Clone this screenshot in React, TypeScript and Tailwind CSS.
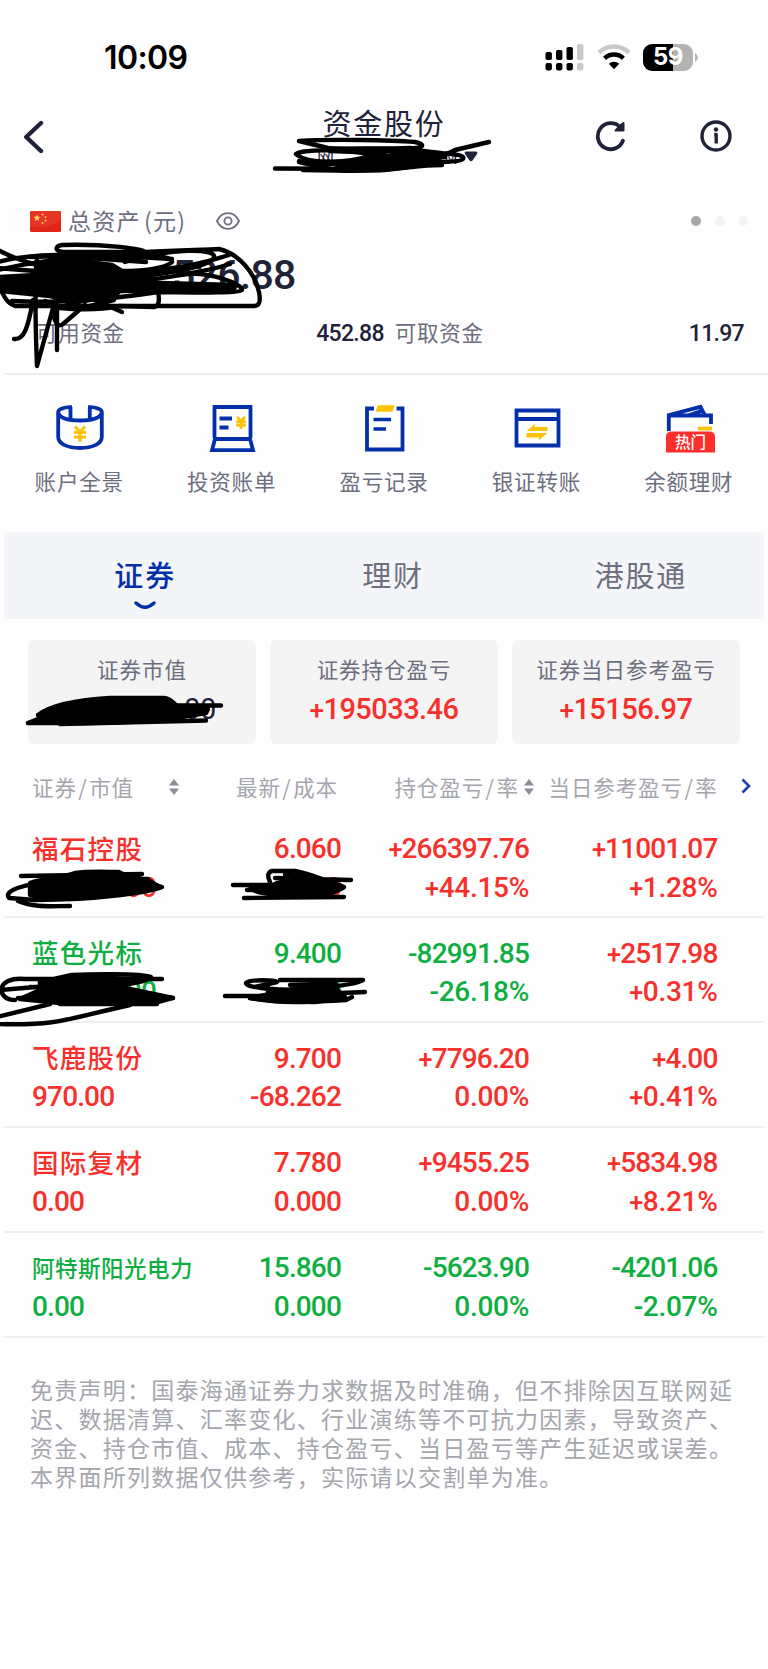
import clsx from 'clsx';
import type { ReactNode } from 'react';

type Tone = 'up' | 'down';

interface Holding {
  name: string;
  value: string;
  price: string;
  cost: string;
  profit: string;
  profitRate: string;
  day: string;
  dayRate: string;
  tone: Tone;
  dayTone: Tone;
  long?: boolean;
}

const holdings: Holding[] = [
  { name: '福石控股', value: '00', price: '6.060', cost: '0', profit: '+266397.76', profitRate: '+44.15%', day: '+11001.07', dayRate: '+1.28%', tone: 'up', dayTone: 'up' },
  { name: '蓝色光标', value: '00', price: '9.400', cost: '0', profit: '-82991.85', profitRate: '-26.18%', day: '+2517.98', dayRate: '+0.31%', tone: 'down', dayTone: 'up' },
  { name: '飞鹿股份', value: '970.00', price: '9.700', cost: '-68.262', profit: '+7796.20', profitRate: '0.00%', day: '+4.00', dayRate: '+0.41%', tone: 'up', dayTone: 'up' },
  { name: '国际复材', value: '0.00', price: '7.780', cost: '0.000', profit: '+9455.25', profitRate: '0.00%', day: '+5834.98', dayRate: '+8.21%', tone: 'up', dayTone: 'up' },
  { name: '阿特斯阳光电力', value: '0.00', price: '15.860', cost: '0.000', profit: '-5623.90', profitRate: '0.00%', day: '-4201.06', dayRate: '-2.07%', tone: 'down', dayTone: 'down', long: true },
];

const toneClass = { up: 'text-[#f8302c]', down: 'text-[#0fae41]' };

// Plus sign is set a bit smaller than the digits
const Num = ({ text, className }: { text: string; className?: string }) => (
  <span className={clsx('font-[Roboto] font-medium whitespace-nowrap', className)}>
    {text.startsWith('+') ? (
      <>
        <span className="text-[0.9em] leading-none">+</span>
        {text.slice(1)}
      </>
    ) : (
      text
    )}
  </span>
);

const StatusBar = () => (
  <div className="flex h-[98px] items-center justify-between pt-4 pr-[70px] pl-[104px]">
    <span className="pt-[2px] font-[Inter] text-[32px] leading-none font-semibold tracking-[-0.600px] text-black">10:09</span>
    <div className="flex items-center">
      <svg width="40" height="28" viewBox="0 0 40 28">
        <g fill="#000">
          <rect x="0.5" y="9" width="6.4" height="8" rx="1.8" />
          <rect x="11" y="7" width="6.4" height="10" rx="1.8" />
          <rect x="21.5" y="4" width="6.4" height="13" rx="1.8" />
          <rect x="0.5" y="20" width="6.4" height="7.4" rx="1.8" />
          <rect x="11" y="20" width="6.4" height="7.4" rx="1.8" />
          <rect x="21.5" y="20" width="6.4" height="7.4" rx="1.8" />
        </g>
        <rect x="32" y="1" width="6.4" height="16" rx="1.8" fill="#c9c9c9" />
        <rect x="32" y="20" width="6.4" height="7.4" rx="1.8" fill="#c9c9c9" />
      </svg>
      <svg className="ml-3" width="34" height="26" viewBox="0 0 34 26">
        <path d="M2 8.6a21.5 21.5 0 0 1 30 0" fill="none" stroke="#c9c9c9" strokeWidth="4.4" />
        <path d="M7.6 14.4a13.4 13.4 0 0 1 18.8 0" fill="none" stroke="#000" strokeWidth="4.4" />
        <path d="M17 25.2l-5.2-5.4a7.4 7.4 0 0 1 10.4 0z" fill="#000" />
      </svg>
      <div className="ml-3 flex h-[27px] w-[50px] items-center justify-center rounded-[9px] bg-linear-to-r from-black from-59% to-[#b3b3b3] to-59% font-[Inter] text-[24px] leading-none font-bold tracking-[-0.5px] text-white">
        59
      </div>
      <svg className="ml-0.5" width="3" height="9" viewBox="0 0 3 9">
        <path d="M0 0Q3 2 3 4.500Q3 7 0 9z" fill="#b3b3b3" />
      </svg>
    </div>
  </div>
);

const NavBar = () => (
  <div className="flex h-[76px] items-center pl-[22px] text-[#1f2238]">
    <svg className="mt-[1px] ml-[1px]" width="24" height="34" viewBox="0 0 24 34" fill="none" stroke="currentColor" strokeWidth="4.4" strokeLinecap="round" strokeLinejoin="round">
      <path d="M18 3L3.200 17L18 31" />
    </svg>
    <div className="ml-[246px] flex w-[188px] flex-col items-center">
      <h1 className="pr-[6px] text-[29px] leading-[38px] tracking-[1.8px]">资金股份</h1>
      <div className="flex h-[28px] items-center gap-2.5 pt-[3px] pl-[21px] text-[17px]">
        <span className="w-[16px]">网</span>
        <span className="w-[91px]" />
        <span>M</span>
        <svg className="-ml-[4px] shrink-0" width="14" height="11" viewBox="0 0 14 11">
          <path d="M2 0.500H12Q14 0.800 13 3L8.500 9.500Q7 11 5.500 9.500L1 3Q0 0.800 2 0.500z" fill="currentColor" />
        </svg>
      </div>
    </div>
    <div className="ml-[114px] flex items-center gap-[73px]">
      <svg width="32" height="32" viewBox="0 0 32 32" fill="none" stroke="currentColor" strokeWidth="3.800">
        <path d="M28 20.700A13 13 0 1 1 25 7" strokeLinecap="round" />
        <path d="M28.500 3V10.500H20.500L27 4z" fill="currentColor" strokeWidth="2" strokeLinejoin="round" />
      </svg>
      <svg width="32" height="32" viewBox="0 0 32 32" fill="none" stroke="currentColor" strokeWidth="3.400">
        <circle cx="16" cy="16" r="14" />
        <circle cx="16" cy="9.500" r="2.200" fill="currentColor" stroke="none" />
        <path d="M14.200 14.500H16.200V23.500" strokeWidth="3.400" strokeLinejoin="round" />
      </svg>
    </div>
  </div>
);

const star = 'M0 -3.800L0.900 -1.200H3.600L1.400 0.500L2.200 3.100L0 1.500L-2.200 3.100L-1.400 0.500L-3.600 -1.200H-0.900z';

const AssetPanel = () => (
  <section className="ml-1 border-b-2 border-[#ebecf1] pt-[26px] pb-[13px] text-[#6d6e7e]">
    <div className="flex h-[42px] items-center pr-[20px] pl-[26px]">
      <svg width="31" height="21" viewBox="0 0 31 21">
        <rect width="31" height="21" rx="1.500" fill="#e0261b" />
        <path d="M0 15Q16 20 31 8V0H0z" fill="#e83f2b" opacity="0.6" />
        <g fill="#ffde5c">
          <path d={star} transform="translate(7 7)" />
          <circle cx="12.500" cy="3.500" r="0.900" />
          <circle cx="15.500" cy="6" r="0.900" />
          <circle cx="15.500" cy="9.500" r="0.900" />
          <circle cx="12.500" cy="12" r="0.900" />
        </g>
      </svg>
      <span className="ml-[7px] pb-[2px] text-[23px] leading-[40px] tracking-[1.200px] whitespace-pre [word-spacing:-3px]">总资产 (元)</span>
      <svg className="ml-[30px]" width="24" height="18" viewBox="0 0 24 18" fill="none" stroke="currentColor" strokeWidth="1.800">
        <path d="M1 9C6 -1.500 18 -1.500 23 9C18 19.500 6 19.500 1 9z" />
        <circle cx="12" cy="9" r="3.600" />
      </svg>
      <div className="ml-auto flex gap-[13.300px]">
        <i className="size-[10px] rounded-full bg-[#a6a6a6]" />
        <i className="size-[10px] rounded-full bg-[#f4f4f4]" />
        <i className="size-[10px] rounded-full bg-[#f4f4f4]" />
      </div>
    </div>
    <div className="flex h-[66px] items-center pt-[2px] pl-[168px]">
      <Num text="526.88" className="text-[41px] tracking-[-0.700px] text-[#1f2238]" />
    </div>
    <div className="flex h-[52px] items-center pr-[24px] pl-[32px] text-[21.500px] tracking-[0.700px]">
      <span className="pb-[3px]">可用资金</span>
      <Num text="452.88" className="ml-auto pt-[1px] text-[23px] tracking-[-0.700px] text-[#1f2238]" />
      <span className="ml-[11px] w-[294px] pb-[3px]">可取资金</span>
      <Num text="11.97" className="pt-[1px] text-[23px] tracking-[-0.700px] text-[#1f2238]" />
    </div>
  </section>
);

const Action = ({ label, children }: { label: string; children: ReactNode }) => (
  <div className="flex flex-1 flex-col items-center">
    <svg className="ml-[1.500px]" width="50" height="50" viewBox="0 0 50 50" fill="none" stroke="#0330a8" strokeWidth="3.800">
      {children}
    </svg>
    <span className="mt-[12px] text-[21.500px] leading-[32px] tracking-[0.800px] text-[#6d6e7e]">{label}</span>
  </div>
);

const yen = 'M-5 -7L0 -1.500L5 -7M0 -1.500V8M-6 -1H6M-6 3.500H6';

const Actions = () => (
  <section className="flex h-[156.500px] px-[3px] pt-[28px]">
    <Action label="账户全景">
      <path d="M17 4.200H15C8 4.200 3.200 6.500 3.200 9V34C3.200 41 13 45 25 45S46.800 41 46.800 34V9C46.800 6.500 42 4.200 35 4.200H33" />
      <path d="M3.200 10C5 15 14 17.500 25 17.500S45 15 46.800 10M15.500 4V15.500M34.800 4V15.500" />
      <path d={yen} transform="translate(25 30.500)" stroke="#fdc30b" strokeWidth="3.200" />
    </Action>
    <Action label="投资账单">
      <path d="M7.500 35V4H43.500V35M5 47.200L8 36H43L46 47.200z" />
      <path d="M12.500 15.500H25M12.500 24.500H21.500" />
      <path d={yen} transform="translate(34 19.500) scale(0.8)" stroke="#fdc30b" strokeWidth="3.600" />
    </Action>
    <Action label="盈亏记录">
      <path d="M14 5.500H7V46.500H42.500V5.500H36.500" />
      <path d="M13.500 16.500H31M13.500 26H26" strokeWidth="3.600" />
      <path d="M18 2.300H35L32.500 8.700H15.500z" fill="#fdc30b" stroke="none" />
    </Action>
    <Action label="银证转账">
      <path d="M4.500 7.500H46.500V42.500H4.500zM4.500 16H46.500" />
      <path d="M14.500 28L23 21V24H35.500V28zM14.500 30H35.500L27 37V34.500H14.500z" fill="#fdc30b" stroke="none" />
    </Action>
    <Action label="余额理财">
      <path d="M3.800 28V12.500H46V21M4 12L35.500 3.800L40 12.500M23 12.500L36 8" />
      <path d="M33 25.500H47" stroke="#fdc30b" />
      <path d="M1 49.500V34Q1 28.500 6.500 28.500H44.500Q50 28.500 50 34V49.500z" fill="#fb302d" stroke="none" />
      <text x="25.500" y="44.500" textAnchor="middle" fill="#fff" stroke="none" fontSize="15.500" fontWeight="500">
        热门
      </text>
    </Action>
  </section>
);

const Tabs = () => (
  <div className="mx-1 flex h-[87px] bg-[#f4f5f9] pl-[18px] text-[29px] tracking-[1.800px] text-[#6d6e7e]">
    <div className="flex w-[249px] flex-col items-center pt-[21px] font-medium text-[#0330a8]">
      <span className="leading-[42px]">证券</span>
      <svg className="mt-[6px]" width="22" height="9" viewBox="0 0 22 9">
        <path d="M2 2Q11 10.500 20 2" fill="none" stroke="currentColor" strokeWidth="3.400" strokeLinecap="round" />
      </svg>
    </div>
    <div className="w-[252px] pt-[21px] text-center leading-[42px]">理财</div>
    <div className="w-[249px] pt-[21px] text-center leading-[42px]">港股通</div>
  </div>
);

const Card = ({ label, children }: { label: string; children: ReactNode }) => (
  <div className="flex h-[104px] flex-col items-center rounded-md bg-[#f4f4f4] pt-[11px]">
    <span className="text-[21.500px] leading-[36px] tracking-[0.950px] text-[#6d6e7e]">{label}</span>
    {children}
  </div>
);

const Sort = ({ className }: { className?: string }) => (
  <svg className={className} width="10" height="16" viewBox="0 0 10 16" fill="#8d8e99">
    <path d="M5 0L10 6.500H0zM5 16L10 9.500H0z" />
  </svg>
);

const Slash = () => <span className="mx-[1.500px]">/</span>;

const TableHead = () => (
  <div className="flex h-[69.600px] items-center pt-[17px] pl-8 text-[21.500px] tracking-[0.900px] text-[#a5a6ad]">
    <span className="w-[137px]">证券<Slash />市值</span>
    <Sort />
    <span className="ml-[57px] w-[158.500px]">最新<Slash />成本</span>
    <span className="w-[129px]">持仓盈亏<Slash />率</span>
    <Sort />
    <span className="ml-[15px] whitespace-nowrap">当日参考盈亏<Slash />率</span>
    <svg className="mb-[3px] ml-[23px]" width="10" height="16" viewBox="0 0 10 16" fill="none" stroke="#1c3fb5" strokeWidth="2.600">
      <path d="M1.500 1.500L8 8L1.500 14.500" />
    </svg>
  </div>
);

const Row = ({ item, index }: { item: Holding; index: number }) => {
  const tone = toneClass[item.tone];
  return (
    <div className="mx-1 h-[104.800px] border-b-2 border-[#efeff0] text-[28px] leading-[38.500px] tracking-[-0.850px]">
      <div className="-ml-1 grid grid-cols-[180px_129px_188px_188.500px] pt-[16.500px] pl-8">
        <div className={clsx('flex flex-col', tone)}>
          <span
            className={clsx(
              '-mt-[1.500px] mb-[1.500px] font-medium whitespace-nowrap',
              item.long ? 'text-[22.500px] tracking-[0.500px]' : 'text-[26.500px] tracking-[1.300px]',
            )}
          >
            {item.name}
          </span>
          <Num text={item.value} className={clsx(index < 2 && 'w-[124px] text-right')} />
        </div>
        <div className={clsx('flex flex-col text-right', tone)}>
          <Num text={item.price} />
          <Num text={item.cost} />
        </div>
        <div className={clsx('flex flex-col text-right', tone)}>
          <Num text={item.profit} />
          <Num text={item.profitRate} className="tracking-[-0.300px]" />
        </div>
        <div className={clsx('flex flex-col text-right', toneClass[item.dayTone])}>
          <Num text={item.day} />
          <Num text={item.dayRate} className="tracking-[-0.300px]" />
        </div>
      </div>
    </div>
  );
};

// Hand-drawn marker strokes hiding the account and private amounts
const Scribbles = () => (
  <svg className="pointer-events-none absolute top-0 left-0" width="768" height="1669" viewBox="0 0 768 1669" fill="none" stroke="#000" strokeWidth="4.400" strokeLinecap="round" strokeLinejoin="round">
    {/* account */}
    <path d="M299 141C330 139 390 140 415 142C426 144 424 149 410 148C380 149 345 150 328 148L299 141" />
    <path d="M275 168.500L384 169C415 169 440 158 455 150L489 142" />
    <path d="M328 149C370 148 410 149 424 151C440 154 466 153 463 159C460 163 420 163 390 161C350 161 320 168 299 161" />
    <path d="M296 154C300 149 350 149 372 155C350 163 308 165 296 154" />
    <path d="M340 165C380 158 400 152 440 156M350 167C390 170 420 160 445 157M303 170C340 170 350 172 384 170C410 168 420 165 442 165" />
    <path d="M340 166C370 161 390 158 432 157L425 162L380 170L335 169z" fill="#000" />
    <path d="M384 151L430 155M299 162L330 169M372 155L430 159M330 151L384 153" />

    {/* total assets */}
    <path d="M146 254C150 248 100 244 62 245C54 246 55 252 64 252L146 252C180 250 205 250 219 249C240 254 255 274 259 292C261 302 259 306 254 306L15 306C6 303 3 294 0 288" />
    <path d="M-2 250C20 262 60 274 110 274M-2 262C40 250 120 256 172 259M-2 270C60 255 120 256 146 256" />
    <path d="M60 262C110 256 174 252 172 262C160 274 90 272 50 276M125 262C170 248 216 248 214 257C212 268 150 276 115 279" />
    <path d="M229 255C190 268 150 272 100 275M230 264C205 272 150 281 110 284M-2 268C40 272 120 276 150 270M30 257L60 256L146 262" />
    <path d="M180 275C210 270 244 285 242 290C240 294 180 292 158 292C120 298 60 304 12 301" />
    <path d="M0 277L36 275L36 264L55 259L80 261L112 265L122 271L155 271L150 277L120 282L236 285L234 289L120 291C112 300 100 297 90 300L70 303L50 296L0 291z" fill="#000" />
    <path d="M158 292Q161 306 154 307L120 306C100 310 80 310 60 308L45 301M100 292L114 300L90 306" />
    <path d="M37 258C34 300 36 340 37 366L53 308M33 300C28 328 24 340 14 339M57 265V350M53 308C54 322 57 328 63 324L85 305M90 298L122 312" />

    {/* market value card */}
    <path d="M38 715C50 706 75 700 110 698L164 698C172 699 172 703 178 706L208 709L206 713L170 719C140 722 90 723 70 723L28 723L50 717z" fill="#000" />
    <path d="M175 705.500H221M28 723L38 719L160 717M60 724L206 720.500" />

    {/* first holding */}
    <path d="M30 883C40 879 65 877 75 873C90 871 105 872 119 872C125 876 145 879 150 881L158 886C140 892 100 896 80 898C60 899 40 899 30 895z" fill="#000" />
    <path d="M21 876L142 874M148 879L60 880C25 884 3 890 9 898L35 900C100 900 150 892 162 887L150 883M18 901C35 908 50 906 70 906" />
    <path d="M277 883C290 879 320 880 333 884L343 888L328 895L275 895L258 892L250 889L270 887z" fill="#000" />
    <path d="M233 885H340M244 898L344 897M270 882C267 876 268 872 272 871H295C310 874 325 880 344 887M275 878L351 880M247 890L290 889M285 875L315 877" />

    {/* second holding */}
    <path d="M40 982C50 978 100 977 130 979L120 987L173 998L155 1003L60 1003L20 999L40 990z" fill="#000" />
    <path d="M162 979L25 979C-5 976 -4 1000 15 1000M30 987C90 990 150 984 151 977C140 973 90 974 72 975L40 982M0 990L60 985M18 998L173 998L120 993M157 1004H60" />
    <path d="M-3 1017L50 1004M-3 1024C60 1026 70 1018 130 1005" />
    <path d="M275 993C290 988 325 986 335 988L345 997L315 1002L275 1001L250 998z" fill="#000" />
    <path d="M225 996H270L365 992M280 980H363C362 984 320 988 300 990C270 990 245 987 246 983C250 979 275 980 277 982L255 987M268 981V998M250 998C280 1004 310 1002 346 1000L352 997M290 985L336 984" />
  </svg>
);

const App = () => {
  return (
    <main className="relative h-[1669px] w-[768px] overflow-hidden bg-[#fefefe] font-['Noto_Sans_CJK_SC',sans-serif]">
      <StatusBar />
      <NavBar />
      <AssetPanel />
      <Actions />
      <Tabs />

      {/* Summary cards */}
      <section className="mt-[21.500px] grid grid-cols-3 gap-[14px] px-7">
        <Card label="证券市值">
          <Num text="00" className="ml-[116px] text-[29px] leading-[44px] font-normal tracking-[-0.400px] text-[#1f2238]" />
        </Card>
        <Card label="证券持仓盈亏">
          <Num text="+195033.46" className="text-[29px] leading-[44px] tracking-[-0.550px] text-[#f8302c]" />
        </Card>
        <Card label="证券当日参考盈亏">
          <Num text="+15156.97" className="text-[29px] leading-[44px] tracking-[-0.550px] text-[#f8302c]" />
        </Card>
      </section>

      {/* Holdings */}
      <TableHead />
      {holdings.map((item, index) => (
        <Row key={item.name} item={item} index={index} />
      ))}

      <p className="mt-[37px] pl-[30px] text-[23px] leading-[29.200px] tracking-[1.250px] whitespace-nowrap text-[#a5a6ad]">
        免责声明：国泰海通证券力求数据及时准确，但不排除因互联网延
        <br />
        迟、数据清算、汇率变化、行业演练等不可抗力因素，导致资产、
        <br />
        资金、持仓市值、成本、持仓盈亏、当日盈亏等产生延迟或误差。
        <br />
        本界面所列数据仅供参考，实际请以交割单为准。
      </p>

      <Scribbles />
    </main>
  );
};

export default App;
